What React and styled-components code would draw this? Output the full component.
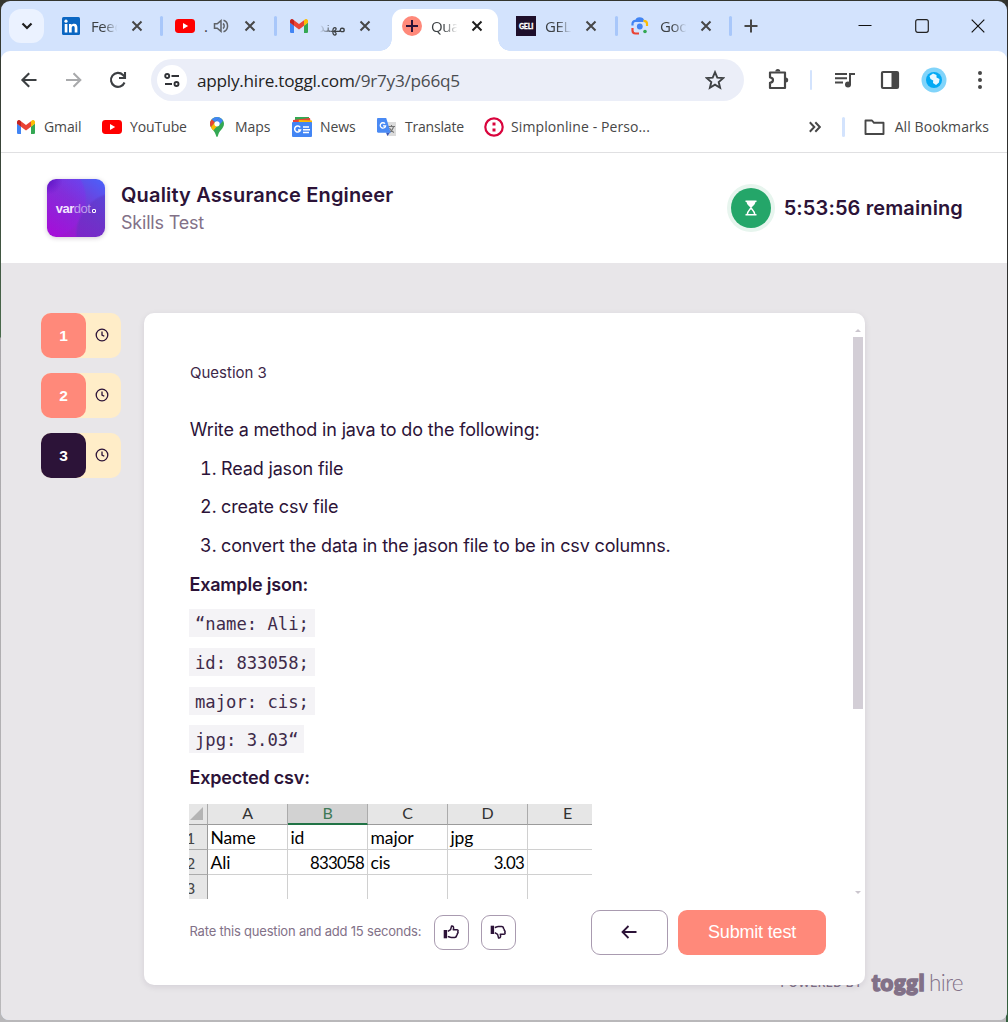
import React from "react";
import styled, { createGlobalStyle, css } from "styled-components";

const ui = `"Open Sans", "Noto Sans", sans-serif`;
const inter = `Inter, "Liberation Sans", sans-serif`;
const ink = "#2c1338";
const coral = "#ff897a";

const Global = createGlobalStyle`
  * { box-sizing: border-box; }
  body { margin: 0; background: #35382f; overflow: hidden; }
`;

const Desktop = styled.div`
  width: 1008px;
  height: 1022px;
  padding: 1px 1px 1px 1px;
  background:
    linear-gradient(180deg, #2f302e 0, #2f302e 500px, #35523a 800px, #35603f 1022px) right / 2px 100% no-repeat,
    linear-gradient(180deg, #33352f 0, #3c4a3c 200px, #4a6b4c 337px, #a9a7aa 338px, #b9b8ba 100%);
`;

const BrowserWindow = styled.div`
  display: flex;
  flex-direction: column;
  width: 1006px;
  height: 1019px;
  border-radius: 9px 9px 8px 8px;
  overflow: hidden;
  background: #d3e3fd;
`;

const TabStrip = styled.div`
  display: flex;
  flex: none;
  height: 50px;
`;

const TabSearch = styled.div`
  display: grid;
  place-items: center;
  width: 35px;
  height: 34px;
  margin: 8px 4px 0 8px;
  border-radius: 12px;
  background: #ebf2ff;
`;

const activeTab = css`
  z-index: 1;
  width: 106px;
  margin: 8px 4.7px 0 3px;
  padding: 0 0 8px 10px;
  border-radius: 11px 11px 0 0;
  background: #fff;
  &::before, &::after {
    content: "";
    position: absolute;
    bottom: 0;
    width: 12px;
    height: 12px;
  }
  &::before { left: -12px; background: radial-gradient(circle at 0 0, transparent 11.5px, #fff 12px); }
  &::after { right: -12px; background: radial-gradient(circle at 100% 0, transparent 11.5px, #fff 12px); }
`;

const TabBox = styled.div`
  position: relative;
  display: flex;
  flex: none;
  align-items: center;
  width: 113.7px;
  padding: 0 0 0 ${(p) => p.$inset || 14}px;
  ${(p) => p.$active && activeTab}
`;

const TabIcon = styled.div`
  display: flex;
  align-items: center;
  width: 20px;
  height: 20px;
  margin-right: 9px;
`;

const TabLabel = styled.div`
  width: 27px;
  height: 24px;
  margin-right: 12px;
  overflow: hidden;
  white-space: nowrap;
  font: 400 15px/25px ${ui};
  letter-spacing: -0.4px;
  color: #3c4043;
  direction: ${(p) => (p.$rtl ? "rtl" : "ltr")};
  mask-image: linear-gradient(${(p) => (p.$rtl ? "270deg" : "90deg")}, #000 45%, transparent 98%);
`;

const AudioLabel = styled(TabLabel)`
  display: flex;
  width: 31px;
  margin-right: 8px;
  gap: 5px;
  mask-image: none;
`;

const Separator = styled.div`
  flex: none;
  width: ${(p) => p.$w || 3}px;
  height: 20px;
  border-radius: 2px;
  background: ${(p) => p.$color || "#a8c7fa"};
`;

const TabSeparator = styled(Separator)`
  margin-left: auto;
  margin-right: -1.5px;
`;

const NewTab = styled.div`
  display: flex;
  align-items: center;
  margin-left: 14px;
`;

const WindowButtons = styled.div`
  display: flex;
  align-items: center;
  gap: 42.5px;
  margin-left: auto;
  padding-right: 22px;
`;

const Chrome = styled.div`
  flex: none;
  height: 102px;
  border-radius: 9px 9px 0 0;
  border-bottom: 1px solid #e0e0e2;
  background: #fff;
`;

const Toolbar = styled.div`
  display: flex;
  align-items: center;
  height: 58px;
  padding: 0 18px;
`;

const NavButtons = styled.div`
  display: flex;
  align-items: center;
  gap: 24px;
`;

const AddressBar = styled.div`
  display: flex;
  align-items: center;
  width: 593px;
  height: 42px;
  margin-left: 22px;
  padding: 0 19px 0 6px;
  border-radius: 21px;
  background: #ebeef8;
`;

const SiteInfo = styled.div`
  display: grid;
  place-items: center;
  width: 30px;
  height: 30px;
  border-radius: 50%;
  background: #fff;
`;

const Url = styled.div`
  flex: 1;
  margin-left: 10px;
  padding-top: 1px;
  font: 400 17.2px/24px ${ui};
  letter-spacing: -0.25px;
  color: #4a4c50;
  b { font-weight: 400; color: #1f1f1f; }
`;

const ToolbarActions = styled.div`
  display: flex;
  flex: 1;
  align-items: center;
  margin-left: 22px;
`;

const Spacer = styled.div`
  flex: none;
  width: ${(p) => p.$w}px;
`;

const Bookmarks = styled.div`
  display: flex;
  align-items: center;
  height: 36px;
  padding: 0 18px 0 16px;
`;

const Bookmark = styled.div`
  display: flex;
  align-items: center;
  width: ${(p) => (p.$w ? p.$w + "px" : "auto")};
  gap: ${(p) => p.$gap || 8}px;
  white-space: nowrap;
  font: 400 14px/20px ${ui};
  letter-spacing: ${(p) => p.$ls || -0.1}px;
  color: #474747;
`;

const BookmarksEnd = styled.div`
  display: flex;
  align-items: center;
  margin-left: auto;
`;

const Header = styled.header`
  display: flex;
  flex: none;
  align-items: center;
  justify-content: space-between;
  height: 110px;
  padding: 0 44px 0 46px;
  background: #fff;
`;

const Company = styled.div`
  display: flex;
  align-items: center;
  gap: 16px;
`;

const CompanyLogo = styled.div`
  display: flex;
  align-items: center;
  justify-content: center;
  width: 58px;
  height: 58px;
  padding-top: 2px;
  border-radius: 9px;
  overflow: hidden;
  background:
    radial-gradient(circle at 0 0, #5a12c4 0, rgba(90, 18, 196, 0) 16px),
    radial-gradient(circle 44px at 72px 56px, rgba(92, 50, 190, 0.45) 94%, transparent 100%),
    radial-gradient(circle 40px at 0 20px, rgba(160, 20, 245, 0.22) 94%, transparent 100%),
    linear-gradient(38deg, #a40fd0 8%, #7a35d2 55%, #4d5ef8 95%);
  box-shadow: 0 1px 5px rgba(44, 19, 56, 0.22);
  font: 700 13px/14px "Liberation Sans", sans-serif;
  letter-spacing: -0.5px;
  color: #f3e6ff;
  span { font-weight: 400; color: #bf9fec; }
`;

const LogoDot = styled.i`
  width: 4px;
  height: 4px;
  margin: 4px 0 0 2px;
  border: 1px solid #fff;
  border-radius: 1px;
`;

const Title = styled.h1`
  margin: 0;
  padding-top: 2px;
  font: 600 20px/28px ${inter};
  letter-spacing: 0.15px;
  color: ${ink};
`;

const Subtitle = styled.div`
  font: 400 18px/28px ${inter};
  letter-spacing: -0.2px;
  color: #827188;
`;

const Timer = styled.div`
  display: flex;
  align-items: center;
  gap: 13px;
  font: 600 20px/28px ${inter};
  letter-spacing: 0.12px;
  color: ${ink};
`;

const TimerBadge = styled.div`
  display: grid;
  place-items: center;
  width: 40px;
  height: 40px;
  border-radius: 50%;
  background: #24a669;
  box-shadow: 0 0 0 4px #e7f5ee;
`;

const Page = styled.main`
  position: relative;
  display: flex;
  flex: 1;
  gap: 23px;
  padding: 50px 0 0 40px;
  background: #e8e6e9;
`;

const QuestionNav = styled.nav`
  display: flex;
  flex-direction: column;
  gap: 15px;
  width: 80px;
`;

const QuestionTab = styled.div`
  display: flex;
  height: 45px;
  border-radius: 10px;
  background: #ffedc8;
`;

const QuestionNumber = styled.div`
  display: grid;
  place-items: center;
  width: 45px;
  height: 45px;
  border-radius: 10px;
  background: ${(p) => (p.$current ? ink : coral)};
  font: 700 15.5px/20px "Liberation Sans", Arial, sans-serif;
  color: #fff;
`;

const ClockCell = styled.div`
  display: flex;
  flex: 1;
  align-items: center;
  padding: 0 0 1px 9px;
`;

const Card = styled.section`
  z-index: 1;
  display: flex;
  flex-direction: column;
  width: 721px;
  height: 672px;
  border-radius: 10px;
  background: #fff;
  box-shadow: 0 2px 6px rgba(44, 19, 56, 0.1);
`;

const ScrollRegion = styled.div`
  display: flex;
  justify-content: space-between;
  height: 586px;
  padding-left: 45px;
  overflow: hidden;
`;

const Question = styled.article`
  padding-top: 49px;
  font: 400 18px/28px ${inter};
  letter-spacing: -0.15px;
  color: ${ink};
`;

const QuestionLabel = styled.div`
  margin-left: 1px;
  margin-bottom: 32px;
  font: 400 15px/22px ${inter};
  letter-spacing: 0;
  color: #3d2748;
`;

const Line = styled.p`
  margin: 0 0 10.8px ${(p) => (p.$bold ? 0.5 : 0.8)}px;
  font-weight: ${(p) => (p.$bold ? 600 : 400)};
  letter-spacing: ${(p) => (p.$bold ? "-0.2px" : "-0.16px")};
`;

const Steps = styled.ol`
  margin: 0;
  padding: 0 0 0 32px;
  li { margin-bottom: 10.6px; }
`;

const CodeLine = styled.div`
  display: flex;
  height: 28px;
  margin-bottom: 10.7px;
`;

const Code = styled.code`
  height: 28px;
  padding: 0 6px 0 6px;
  background: #f4f3f6;
  font: 400 17.2px/30px "DejaVu Sans Mono", monospace;
  letter-spacing: 0;
  color: #402b4a;
  white-space: pre;
`;

const Sheet = styled.div`
  display: grid;
  grid-template-columns: 19px 80px 80px 80px 80px 80px;
  grid-template-rows: 21px 25px 25px 25px;
  width: 403px;
  height: 95px;
  overflow: hidden;
  margin-top: 12px;
  font: 400 17.5px/24px Lato, Carlito, sans-serif;
  letter-spacing: -0.1px;
  color: #000;
`;

const HeadCell = styled.div`
  display: flex;
  justify-content: center;
  border-right: 1px solid #ababab;
  border-bottom: ${(p) => (p.$selected ? "2px solid #217346" : "1px solid #9b9b9b")};
  background: ${(p) => (p.$selected ? "#d2d2d2" : "#e6e6e6")};
  color: ${(p) => (p.$selected ? "#3f7a57" : "#333")};
  font-size: 16px;
  line-height: 18px;
`;

const Corner = styled(HeadCell)`
  justify-content: flex-end;
  align-items: flex-end;
  padding: 0 4px 4px 0;
`;

const RowHead = styled.div`
  border-right: 1px solid #9b9b9b;
  border-bottom: 1px solid #ababab;
  background: #e6e6e6;
  color: #444;
  font-size: 16px;
  text-indent: -3px;
  line-height: 26px;
`;

const Cell = styled.div`
  padding: 1px 3px 0 2.5px;
  border-right: 1px solid #d0d0d0;
  border-bottom: 1px solid #d0d0d0;
  text-align: ${(p) => (p.$right ? "right" : "left")};
  ${(p) => p.$right && "font-size: 16.8px; letter-spacing: -0.75px;"}
`;

const Scrollbar = styled.div`
  display: flex;
  flex-direction: column;
  align-items: center;
  width: 10px;
  height: 565px;
  margin: 16px 2px 0 0;
`;

const Thumb = styled.div`
  width: 10px;
  height: 372px;
  margin: 5px 0 auto;
  background: #d3ced6;
`;

const Arrow = styled.i`
  width: 0;
  height: 0;
  border: 3px solid transparent;
  border-${(p) => (p.$up ? "bottom" : "top")}-color: #cbc6ce;
  border-${(p) => (p.$up ? "top" : "bottom")}-width: 0;
`;

const Actions = styled.footer`
  display: flex;
  align-items: center;
  height: 45px;
  margin-top: 11px;
  padding: 0 39px 0 45.5px;
`;

const RateText = styled.div`
  width: 244.5px;
  padding-bottom: 3px;
  font: 400 13px/20px ${inter};
  letter-spacing: -0.2px;
  color: #827188;
  white-space: nowrap;
`;

const OutlineButton = styled.button`
  display: grid;
  place-items: center;
  width: ${(p) => p.$w}px;
  height: ${(p) => p.$h}px;
  padding: 0 1px 1px 0;
  border: 1px solid #a99bb0;
  border-radius: 9px;
  background: #fff;
  color: ${ink};
`;

const RateButtons = styled.div`
  display: flex;
  gap: 12px;
`;

const MainButtons = styled.div`
  display: flex;
  gap: 10px;
  margin-left: auto;
`;

const Submit = styled.button`
  width: 148px;
  height: 45px;
  padding: 0 0 1px;
  border: 0;
  border-radius: 9px;
  background: ${coral};
  font: 400 18px/24px "Liberation Sans", Arial, sans-serif;
  letter-spacing: -0.18px;
  color: #fff;
`;

const Powered = styled.div`
  position: absolute;
  right: 44px;
  bottom: 21px;
  display: flex;
  align-items: center;
  color: #827188;
  font: 500 12px/32px ${inter};
  letter-spacing: 0.3px;
`;

const Brand = styled.div`
  margin-left: 9px;
  font: 300 22.5px/32px Lato, sans-serif;
  letter-spacing: -0.6px;
  b {
    margin-right: 4px;
    font-weight: 900;
    font-size: 22px;
    letter-spacing: 0.7px;
    -webkit-text-stroke: 1.6px #827188;
  }
`;

const Svg = ({ w = 20, h, box = "0 0 20 20", children, ...rest }) => (
  <svg width={w} height={h || w} viewBox={box} fill="none" display="block" {...rest}>
    {children}
  </svg>
);

const CloseX = ({ dark }) => (
  <Svg w={14} box="0 0 14 14" stroke={dark ? "#1f1f1f" : "#474747"} strokeWidth="2">
    <path d="M2.5 2.5l9 9M11.5 2.5l-9 9" />
  </Svg>
);

const LinkedIn = () => (
  <Svg w={18} box="0 0 18 18">
    <rect width="18" height="18" rx="1.5" fill="#0a66c2" />
    <circle cx="4" cy="4.2" r="1.6" fill="#fff" />
    <path d="M2.7 7h2.7v8.4H2.7zM7 7h2.5v1.2c.5-.9 1.5-1.4 2.7-1.4 2.6 0 3.2 1.7 3.2 4v4.6h-2.700v-4.1c0-1.1-.1-2.3-1.4-2.3-1.4 0-1.6 1.1-1.6 2.2v4.2H7z" fill="#fff" />
  </Svg>
);

const YouTube = () => (
  <Svg w={20} h={14} box="0 0 20 14">
    <rect width="20" height="14" rx="3.4" fill="#f00" />
    <path d="M8 4l5.2 3L8 10z" fill="#fff" />
  </Svg>
);

const Gmail = () => (
  <Svg w={18} h={14} box="0 0 18 14">
    <path d="M0 3.5V12.7C0 13.4.6 14 1.3 14H4V6.5z" fill="#4285f4" />
    <path d="M18 3.5V12.7c0 .7-.6 1.3-1.3 1.3H14V6.5z" fill="#34a853" />
    <path d="M14 1.3V6.8l4-3V2c0-1.7-1.9-2.6-3.2-1.6z" fill="#fbbc04" />
    <path d="M4 6.8V1.3L9 5l5-3.7v5.5l-5 3.7z" fill="#ea4335" />
    <path d="M0 2v1.8l4 3V1.3L3.2.4C1.9-.6 0 .3 0 2z" fill="#c5221f" />
  </Svg>
);

const TogglIcon = () => (
  <Svg>
    <circle cx="10" cy="10" r="10" fill={coral} />
    <path d="M10 4v12M4 10h12" stroke={ink} strokeWidth="2" />
  </Svg>
);

const Geli = styled.div`
  display: grid;
  place-items: center;
  width: 20px;
  height: 20px;
  background: #1e0f2b;
  font: 900 7px/8px Lato, sans-serif;
  letter-spacing: -0.2px;
  color: #fff;
  -webkit-text-stroke: 0.3px #fff;
`;

const Lens = () => (
  <Svg w={18} box="0 0 18 18" strokeWidth="2.2">
    <path d="M1.5 8.5V7c0-2 1-3.2 3-3.2h8" stroke="#4285f4" />
    <path d="M5.5 3.5c.3-2 1.3-2.2 3-2.2s3.2.3 3.5 2.2" stroke="#4285f4" fill="#4285f4" />
    <path d="M12.5 3.8c2.5 0 3.5 1.2 3.5 3V9" stroke="#fbbc04" />
    <path d="M1.5 11v2.5c0 2 1.2 3 3 3H8" stroke="#ea4335" />
    <circle cx="8.8" cy="9.5" r="2.9" fill="#4285f4" />
    <circle cx="14" cy="14.5" r="1.8" fill="#34a853" />
  </Svg>
);

const MapsPin = () => (
  <Svg w={14} h={20} box="0 0 14 20">
    <path d="M7 0C3.1 0 0 3 0 6.8c0 4.7 4.8 6.4 6 11.8.2.9.4 1.4 1 1.4s.8-.5 1-1.4c1.2-5.4 6-7.1 6-11.8C14 3 10.9 0 7 0z" fill="#34a853" />
    <path d="M7 0C4.9 0 3 .9 1.7 2.4L5 5.2 9.2.4C8.5.1 7.8 0 7 0z" fill="#4285f4" />
    <path d="M1.7 2.4C.6 3.6 0 5.1 0 6.8c0 1.3.4 2.4.9 3.4L5 5.2z" fill="#ea4335" />
    <path d="M9.2.4L5 5.2l4 3.3 4-4.8C12.2 2.2 10.900 1 9.2.4z" fill="#4285f4" />
    <path d="M.9 10.2c.6 1.2 1.5 2.2 2.4 3.2L9.5 6.5 5 5.2z" fill="#fbbc04" />
    <circle cx="7" cy="6.8" r="2.6" fill="#fff" />
  </Svg>
);

const News = () => (
  <Svg>
    <path d="M3 0h14v8H3z" fill="#34a853" />
    <path d="M1 3l17-2 1 6H1z" fill="#ea4335" />
    <path d="M7 3l13 .5V8H6z" fill="#fbbc04" />
    <rect y="5" width="20" height="15" rx="1" fill="#4285f4" />
    <path d="M8.2 10.4A3 3 0 1 0 8.5 13H6M11 10h6M11 12.7h7M11 15.4h6" stroke="#fff" strokeWidth="1.5" />
  </Svg>
);

const Translate = () => (
  <Svg>
    <path d="M7 5h12v14H10z" fill="#dcdcdc" />
    <path d="M11 9.5h7M14.5 8v1.5M16.5 10c-.7 2.5-2.5 4.5-4.5 5.5M12.5 11c.8 2 2.5 3.7 4.5 4.5" stroke="#757575" strokeWidth="1.1" />
    <path d="M9 15.5h4L10.5 19z" fill="#3a56b8" />
    <path d="M1.2 1h8l4.5 14.7H1.2C.5 15.7 0 15.2 0 14.5V2.2C0 1.5.5 1 1.2 1z" fill="#4a8af4" />
    <path d="M8 6.7A2.7 2.7 0 1 0 8.6 8.8H6" stroke="#fff" strokeWidth="1.3" />
  </Svg>
);

const Simplon = () => (
  <Svg>
    <circle cx="10" cy="10" r="8.7" stroke="#d9043d" strokeWidth="2.2" />
    <path d="M8.5 5.5h3v3h-3zM8.5 11.5h3v3h-3z" fill="#d9043d" />
  </Svg>
);

const Speaker = () => (
  <Svg w={16} h={24} box="0 -4 16 24" stroke="#5f6368" strokeWidth="1.5">
    <path d="M1.5 5.8h2.7L8 2.6v10.8L4.2 10.2H1.5z" />
    <path d="M10 5.5c1.6 1 1.6 4 0 5M10.5 2.3c5.4 1.7 5.4 9.7 0 11.4" />
  </Svg>
);

const Clock = () => (
  <Svg w={14} box="0 0 14 14" stroke={ink} strokeWidth="1.3">
    <circle cx="7" cy="7" r="5.8" />
    <path d="M7 3.5V7l2.3 1.3" />
  </Svg>
);

const ThumbUp = ({ down }) => (
  <Svg w={16} box="0 0 16 16">
    <g transform={down ? "matrix(1 0 0 -1 0 16)" : undefined}>
      <path d="M.7 6h3.4v8.3H.7z" fill={ink} />
      <path d="M4.8 7.3L7.6 5.6 8.6 1.9C10.3 1.7 11 3.2 10.3 5.7h3.6c1.1 0 1.5 1 .9 1.8.5.9.1 1.7-.5 2.1.2.9-.2 1.5-.8 1.9 0 1.3-.7 1.9-1.9 1.9H8.3c-1.2 0-2.1-.5-3.5-1" stroke={ink} strokeWidth="1.5" strokeLinejoin="round" />
    </g>
  </Svg>
);

function Tab({ icon, label, active, rtl, audio, last, inset }) {
  return (
    <TabBox $active={active} $inset={inset}>
      <TabIcon>{icon}</TabIcon>
      {audio ? (
        <AudioLabel><span>{label}</span><Speaker /></AudioLabel>
      ) : (
        <TabLabel $rtl={rtl}>{label}</TabLabel>
      )}
      <CloseX dark={active} />
      {last && <TabSeparator />}
    </TabBox>
  );
}

const questions = [1, 2, 3];
const codeLines = ["“name: Ali;", "id: 833058;", "major: cis;", "jpg: 3.03“"];
const rows = [
  ["1", "Name", "id", "major", "jpg", ""],
  ["2", "Ali", "833058", "cis", "3.03", ""],
  ["3", "", "", "", "", ""],
];

export default function App() {
  return (
    <Desktop>
      <Global />
      <BrowserWindow>
        <TabStrip>
          <TabSearch>
            <Svg w={12} box="0 0 12 12" stroke="#1f1f1f" strokeWidth="2.2"><path d="M1.5 3.5L6 8l4.5-4.5" /></Svg>
          </TabSearch>
          <Tab icon={<LinkedIn />} label="Feed" last />
          <Tab icon={<YouTube />} label="." audio last inset={13.3} />
          <Tab icon={<Gmail />} label="مهند" rtl inset={14.6} />
          <Tab icon={<TogglIcon />} label="Qual" active />
          <Tab icon={<Geli>GELI</Geli>} label="GELI" last inset={13.3} />
          <Tab icon={<Lens />} label="Goo" last inset={14.6} />
          <NewTab>
            <Svg w={14} box="0 0 14 14" stroke="#474747" strokeWidth="2"><path d="M7 .5v13M.5 7h13" /></Svg>
          </NewTab>
          <WindowButtons>
            <Svg w={14} box="0 0 14 14" stroke="#111"><path d="M.5 6.5h13" /></Svg>
            <Svg w={14} box="0 0 14 14" stroke="#222" strokeWidth="1.2"><rect x=".7" y=".7" width="12.6" height="12.6" rx="2" /></Svg>
            <Svg w={14} box="0 0 14 14" stroke="#111" strokeWidth="1.2"><path d="M.7.7l12.6 12.6M13.3.7L.7 13.3" /></Svg>
          </WindowButtons>
        </TabStrip>

        <Chrome>
          <Toolbar>
            <NavButtons>
              <Svg stroke="#3c3f42" strokeWidth="2.1"><path d="M17.500 10H4M10.2 3.2L3.4 10l6.8 6.8" /></Svg>
              <Svg stroke="#a9aaac" strokeWidth="2.1"><path d="M3 10h14M10.5 3.2l6.8 6.8-6.8 6.8" /></Svg>
              <Svg w={22} box="0 0 22 22" stroke="#3c3f42" strokeWidth="2.1"><path d="M17.5 13.5A7 7 0 1 1 16 6l2 2" /><path d="M18 3v6h-6" /></Svg>
            </NavButtons>
            <AddressBar>
              <SiteInfo>
                <Svg w={16} box="0 0 16 16" stroke="#303236" strokeWidth="1.9"><circle cx="3.2" cy="4" r="2" /><path d="M7.5 4H15M1 12h7" /><circle cx="12.5" cy="12" r="2" /></Svg>
              </SiteInfo>
              <Url><b>apply.hire.toggl.com</b>/9r7y3/p66q5</Url>
              <Svg stroke="#3f4245" strokeWidth="1.9"><path d="M10 2.2l2.3 5.4 5.9.5-4.5 3.9 1.4 5.8-5.1-3.1-5.1 3.1L6.3 12 1.8 8.1l5.9-.5z" /></Svg>
            </AddressBar>
            <ToolbarActions>
              <Svg w={24} box="0 0 24 24" stroke="#474747" strokeWidth="2.2"><path d="M4 4.5h15v15.5H4v-5.2c4-.5 4-5 0-5.5z" strokeLinejoin="round" /><path d="M9.3 3.5a2.5 2.5 0 0 1 5 0zM19.7 9.5a2.5 2.5 0 0 1 0 5z" fill="#474747" stroke="none" /></Svg>
              <Spacer $w={20} />
              <Separator $w={2} $color="#d3e3fd" />
              <Spacer $w={23} />
              <Svg w={20} h={18} box="0 0 20 18" stroke="#474747" strokeWidth="2"><path d="M0 3h12M0 7.3h12M0 11.6h8M15 13.5V3h5" /><circle cx="13" cy="13.5" r="3" fill="#474747" stroke="none" /></Svg>
              <Spacer $w={25} />
              <Svg w={20} box="0 0 20 20"><rect x="2" y="2" width="16" height="16" rx="1" stroke="#474747" strokeWidth="2.2" /><path d="M11.5 2H18v16h-6.5z" fill="#474747" /></Svg>
              <Spacer $w={21} />
              <Svg w={26} box="0 0 26 26"><circle cx="13" cy="13" r="12.5" fill="#81d4fa" /><circle cx="13" cy="13" r="8" fill="#03a9f4" /><path d="M8.5 9l3.500-2.500 3.500 1.500 0 2.500 3 1.500-.5 3.500-3 2.500-3-2 .2-2.500L9.500 12z" fill="#e8f7ff" /></Svg>
              <Spacer $w={30} />
              <Svg w={6} h={20} box="0 0 6 20"><g fill="#474747"><circle cx="3" cy="3" r="2" /><circle cx="3" cy="10" r="2" /><circle cx="3" cy="17" r="2" /></g></Svg>
            </ToolbarActions>
          </Toolbar>
          <Bookmarks>
            <Bookmark $w={85} $gap={9}><Gmail />Gmail</Bookmark>
            <Bookmark $w={108}><YouTube />YouTube</Bookmark>
            <Bookmark $w={82} $gap={11}><MapsPin />Maps</Bookmark>
            <Bookmark $w={85}><News />News</Bookmark>
            <Bookmark $w={107} $ls={-0.2}><Translate />Translate</Bookmark>
            <Bookmark $gap={7} $ls={0.1}><Simplon />Simplonline - Perso...</Bookmark>
            <BookmarksEnd>
              <Svg w={12} box="0 0 12 12" stroke="#474747" strokeWidth="2"><path d="M.8 1.3L5.3 6 .8 10.7M6.3 1.3L10.8 6l-4.5 4.7" /></Svg>
              <Spacer $w={21} />
              <Separator $w={3} $color="#d3e3fd" />
              <Spacer $w={19} />
              <Bookmark $gap={10} $ls={0.08}>
                <Svg w={21} h={18} box="0 0 21 18" stroke="#474747" strokeWidth="1.9"><path d="M1.5 2.5h6.5l2 2.3h9.5v11.2h-18z" strokeLinejoin="round" /></Svg>
                All Bookmarks
              </Bookmark>
            </BookmarksEnd>
          </Bookmarks>
        </Chrome>

        <Header>
          <Company>
            <CompanyLogo>var<span>dot</span><LogoDot /></CompanyLogo>
            <div>
              <Title>Quality Assurance Engineer</Title>
              <Subtitle>Skills Test</Subtitle>
            </div>
          </Company>
          <Timer>
            <TimerBadge>
              <Svg w={12} h={16} box="0 0 12 16">
                <path d="M.5 1.2h11M.5 14.8h11" stroke="#fff" strokeWidth="1.5" />
                <path d="M1.5 1c0 4 3 5.2 4.5 7 1.5-1.8 4.5-3 4.5-7z" fill="#fff" />
                <path d="M2.2 14.5c0-3 2.3-4.5 3.8-6.5 1.5 2 3.8 3.5 3.8 6.5" stroke="#fff" strokeWidth="1.4" />
              </Svg>
            </TimerBadge>
            5:53:56 remaining
          </Timer>
        </Header>

        <Page>
          <QuestionNav>
            {questions.map((n) => (
              <QuestionTab key={n}>
                <QuestionNumber $current={n === 3}>{n}</QuestionNumber>
                <ClockCell><Clock /></ClockCell>
              </QuestionTab>
            ))}
          </QuestionNav>
          <Card>
            <ScrollRegion>
              <Question>
                <QuestionLabel>Question 3</QuestionLabel>
                <Line>Write a method in java to do the following:</Line>
                <Steps>
                  <li>Read jason file</li>
                  <li>create csv file</li>
                  <li>convert the data in the jason file to be in csv columns.</li>
                </Steps>
                <Line $bold>Example json:</Line>
                {codeLines.map((line) => (
                  <CodeLine key={line}><Code>{line}</Code></CodeLine>
                ))}
                <Line $bold>Expected csv:</Line>
                <Sheet>
                  <Corner><Svg w={13} box="0 0 13 13"><path d="M13 0v13H0z" fill="#b4b4b4" /></Svg></Corner>
                  {["A", "B", "C", "D", "E"].map((c) => (
                    <HeadCell key={c} $selected={c === "B"}>{c}</HeadCell>
                  ))}
                  {rows.map(([head, ...cells]) => (
                    <React.Fragment key={head}>
                      <RowHead>{head}</RowHead>
                      {cells.map((value, i) => (
                        <Cell key={i} $right={/^[\d.]+$/.test(value)}>{value}</Cell>
                      ))}
                    </React.Fragment>
                  ))}
                </Sheet>
              </Question>
              <Scrollbar><Arrow $up /><Thumb /><Arrow /></Scrollbar>
            </ScrollRegion>
            <Actions>
              <RateText>Rate this question and add 15 seconds:</RateText>
              <RateButtons>
                <OutlineButton $w={35} $h={35}><ThumbUp /></OutlineButton>
                <OutlineButton $w={35} $h={35}><ThumbUp down /></OutlineButton>
              </RateButtons>
              <MainButtons>
                <OutlineButton $w={77} $h={45}>
                  <Svg w={16} box="0 0 16 16" stroke={ink} strokeWidth="1.8"><path d="M15.5 8H1.5M7.5 2L1.5 8l6 6" /></Svg>
                </OutlineButton>
                <Submit>Submit test</Submit>
              </MainButtons>
            </Actions>
          </Card>
          <Powered>POWERED BY<Brand><b>toggl</b>hire</Brand></Powered>
        </Page>
      </BrowserWindow>
    </Desktop>
  );
}
